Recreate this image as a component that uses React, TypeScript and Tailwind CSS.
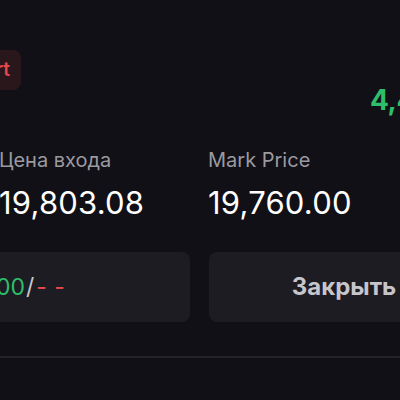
import React from 'react';

const font = { fontFamily: '"Inter", "Noto Sans", sans-serif' };

export default function App() {
  return (
    <div className="w-[400px] h-[400px] bg-[#111016] overflow-hidden relative" style={font}>
      <div className="absolute left-[-209px] top-0 w-[800px]">
        {/* header row */}
        <div className="flex items-start justify-between h-[130px] pt-[50px] pr-[97px]">
          <div className="flex">
            <div className="w-[209px]" />
            <div className="h-[40px] -ml-[80px] w-[101px] rounded-lg bg-[#2a171b] flex items-center justify-end pr-[11px]">
              <span className="text-[#e5484d] text-[19px] font-semibold">Short</span>
            </div>
          </div>
          <div className="mt-[36px] text-[28px] font-bold text-[#2ebd6b] leading-none tracking-[-0.5px]">4,420.50</div>
        </div>

        {/* price columns */}
        <div className="grid grid-cols-[209px_208px_208px] mt-[17px]">
          <div />
          <div className="flex flex-col">
            <span className="text-[20px] text-[#9b9aa1] leading-[26px] -ml-[1px]">Цена входа</span>
            <span className="text-[31px] text-white leading-none mt-[14px] tracking-[0.2px] -ml-[1px]">19,803.08</span>
          </div>
          <div className="flex flex-col">
            <span className="text-[20px] text-[#9b9aa1] leading-[26px]">Mark Price</span>
            <span className="text-[31px] text-white leading-none mt-[14px] tracking-[0.2px]">19,760.00</span>
          </div>
        </div>

        {/* buttons */}
        <div className="flex gap-[19px] mt-[34px]">
          <div className="w-[399px] h-[70px] rounded-lg bg-[#1d1c22] flex items-center pl-[122px] text-[23px]">
            <span className="text-[#2ebd6b]">20,000.00</span>
            <span className="text-[#c8c8cc] ml-[1px]">/</span>
            <span className="text-[#e5484d] ml-[2px] tracking-[0.5px]">- -</span>
          </div>
          <div className="w-[270px] h-[70px] rounded-lg bg-[#1d1c22] flex items-center justify-center">
            <span className="text-[24px] font-bold text-[#c6c5cb]">Закрыть</span>
          </div>
        </div>

        <div className="h-[2px] bg-[#232228] mt-[34px]" />
      </div>
    </div>
  );
}
